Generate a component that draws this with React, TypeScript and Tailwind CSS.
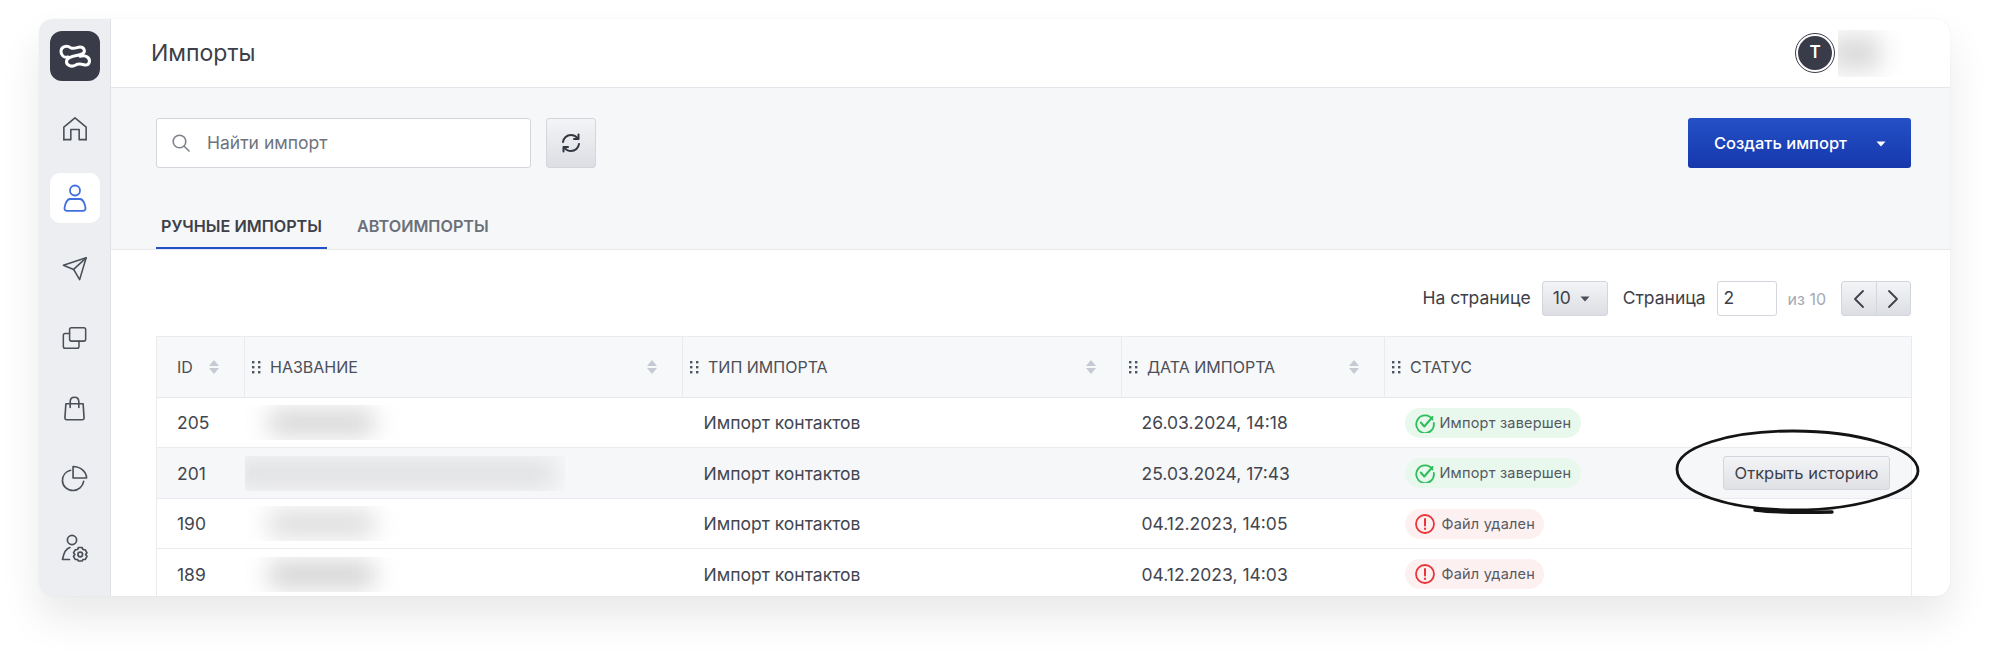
import React from 'react';

const inter = "font-['Inter','Noto_Sans',sans-serif]";

const rows = [
  { id: '205', date: '26.03.2024, 14:18', ok: true, height: 'h-[50px]', blur: 'ml-[24px] w-[105px] bg-[#d4d4d4]' },
  { id: '201', date: '25.03.2024, 17:43', ok: true, height: 'h-[51px]', blur: 'ml-[-10px] w-[320px] bg-[#dcdddf]' },
  { id: '190', date: '04.12.2023, 14:05', ok: false, height: 'h-[50px]', blur: 'ml-[24px] w-[105px] bg-[#dadada]' },
  { id: '189', date: '04.12.2023, 14:03', ok: false, height: 'h-[51px]', blur: 'ml-[24px] w-[105px] bg-[#d0d0d0]' },
];

const Logo = () => (
  <svg width="50" height="50" viewBox="58 32 150 150" fill="none" stroke="white" strokeWidth="9" strokeLinecap="round" strokeLinejoin="round">
    <path d="M112 110C100 114 90 104 91 92C92 78 108 74 120 82C130 88 140 80 148 80C162 80 166 96 154 101C140 107 114 106 108 120C104 134 122 142 135 134C145 128 155 132 162 134C176 136 182 120 170 110C162 104 154 106 148 108" />
  </svg>
);

const icon = { fill: 'none', stroke: '#4b4f58', strokeWidth: 1.7, strokeLinecap: 'round', strokeLinejoin: 'round' } as const;

const Home = () => (
  <svg width="26" height="25" viewBox="0 0 28 26" {...icon}>
    <path d="M2 25V11.5L14 1.5L26 11.5V25" />
    <path d="M2 25H9.5V14H18.5V25H26" />
  </svg>
);

const User = () => (
  <svg width="24" height="28" viewBox="0 0 24 28" fill="none" stroke="#3f6fe0" strokeWidth="1.8" strokeLinejoin="round">
    <circle cx="12" cy="6.5" r="5" />
    <path d="M7 15H17C20 15 22 20 22.5 24C22.7 25.8 21.5 26.8 20 26.8H4C2.5 26.8 1.3 25.8 1.5 24C2 20 4 15 7 15Z" />
  </svg>
);

const Send = () => (
  <svg width="26" height="25" viewBox="0 0 28 26" {...icon}>
    <path d="M1.5 9.5L26 1.5L19 25L12.5 14L1.5 9.5Z" />
    <path d="M12.5 14L26 1.5" />
  </svg>
);

const Copy = () => (
  <svg width="25" height="24" viewBox="0 0 28 26" {...icon}>
    <rect x="8.5" y="1.5" width="18" height="15" rx="2" />
    <path d="M8.5 8H3.5C2.4 8 1.5 8.9 1.5 10V22.5C1.5 23.6 2.4 24.5 3.5 24.5H17C18.1 24.5 19 23.6 19 22.5V16.5" />
  </svg>
);

const Bag = () => (
  <svg width="23" height="25" viewBox="0 0 24 26" {...icon}>
    <path d="M3 8H21L22 23C22 24 21.5 24.7 20.5 24.7H3.5C2.5 24.7 2 24 2 23L3 8Z" />
    <path d="M7.5 12V6C7.5 3 9.5 1.2 12 1.2C14.5 1.2 16.5 3 16.5 6V12" />
  </svg>
);

const Pie = () => (
  <svg width="27" height="27" viewBox="0 0 28 28" {...icon}>
    <path d="M10 5.5C5 6.8 1.5 11 1.5 16C1.5 22 6.5 26.5 12.5 26.5C18 26.5 22.5 22.5 23.5 17" />
    <path d="M12.5 1.5C20 1.5 26.5 7 26.5 13.5H12.5V1.5Z" />
  </svg>
);

const UserCog = () => (
  <svg width="28" height="28" viewBox="0 0 28 28" {...icon}>
    <circle cx="11" cy="6" r="4.6" />
    <path d="M9 13.5C5 14.5 2.5 20 1.5 25.5H8.5" />
    <path d="M17.5 13.5H21L22 15.5L24.3 15.8L26 18.8L24.6 20.5L26 22.3L24.3 25.3L22 25.5L21 27H17.5L16.5 25.5L14.2 25.3L12.5 22.3L13.9 20.5L12.5 18.8L14.2 15.8L16.5 15.5L17.5 13.5Z" />
    <circle cx="19.25" cy="20.5" r="2.3" />
  </svg>
);

const Grip = () => (
  <svg width="9" height="14" viewBox="0 0 9 14" fill="#4b5563">
    <rect x="0" y="1" width="2.4" height="2.4" />
    <rect x="6" y="1" width="2.4" height="2.4" />
    <rect x="0" y="6" width="2.4" height="2.4" />
    <rect x="6" y="6" width="2.4" height="2.4" />
    <rect x="0" y="11" width="2.4" height="2.4" />
    <rect x="6" y="11" width="2.4" height="2.4" />
  </svg>
);

const Sort = () => (
  <svg width="10" height="14" viewBox="0 0 10 14" fill="#c5cad3">
    <path d="M5 0L10 6H0Z" />
    <path d="M5 14L0 8H10Z" />
  </svg>
);

const Caret = ({ color }: { color: string }) => (
  <svg width="10" height="6" viewBox="0 0 10 6" fill={color}>
    <path d="M0.5 0.5H9.5L5 5.5Z" />
  </svg>
);

const Chevron = ({ right }: { right?: boolean }) => (
  <svg width="12" height="20" viewBox="0 0 12 20" fill="none" stroke="#3d4048" strokeWidth="1.8" strokeLinecap="round" strokeLinejoin="round">
    <path d={right ? 'M2 2L10 10L2 18' : 'M10 2L2 10L10 18'} />
  </svg>
);

const Badge = ({ ok }: { ok: boolean }) => (
  <span className={`inline-flex h-[30px] items-center rounded-full pl-[10px] ${ok ? 'gap-[5px] bg-[#e8f8ec] pr-[10px]' : 'gap-[7px] bg-[#fdf0f0] pr-[9px]'} text-[14.5px] tracking-[0.2px] text-[#565a63]`}>
    {ok ? (
      <svg width="20" height="20" viewBox="0 0 20 20" fill="none" stroke="#2fbd5c" strokeWidth="1.8" strokeLinecap="round" strokeLinejoin="round">
        <path d="M17.5 6.5A8.8 8.8 0 1 0 18.8 10" />
        <path d="M5.8 9.5L9.3 13.5L17.5 4" strokeWidth="2" />
      </svg>
    ) : (
      <svg width="20" height="20" viewBox="0 0 20 20" fill="none" stroke="#e8353a" strokeWidth="1.8" strokeLinecap="round">
        <circle cx="10" cy="10" r="9" />
        <path d="M10 5V11.5" strokeWidth="2" />
        <path d="M10 14.7V15" strokeWidth="2.2" />
      </svg>
    )}
    {ok ? 'Импорт завершен' : 'Файл удален'}
  </span>
);

const Head = ({ title, width, sort = true }: { title: string; width: string; sort?: boolean }) => (
  <th className={`${width} border-l border-[#e9ebef] p-0 font-normal`}>
    <div className="flex items-center pl-[7px] pr-[25px] text-[16px] text-[#4b4f58]">
      <Grip />
      <span className="ml-[9px] flex-1 text-left">{title}</span>
      {sort && <Sort />}
    </div>
  </th>
);

export default function App() {
  return (
    <div className={`h-[656px] w-[1990px] overflow-hidden bg-white pl-[39px] pt-[19px] ${inter}`}>
      <div className="relative flex h-[577px] w-[1911px] overflow-hidden rounded-[14px] bg-white shadow-[0_0_1px_rgba(0,0,0,0.12),0_22px_40px_rgba(0,0,0,0.09)]">
        {/* sidebar */}
        <aside className="flex w-[72px] shrink-0 flex-col items-center border-r border-[#dfe1e7] bg-[#eceef2] pt-[12px]">
          <div className="flex h-[50px] w-[50px] items-center justify-center rounded-[12px] bg-[#393c48]">
            <Logo />
          </div>
          <div className="mt-[22px] flex h-[50px] w-[50px] items-center justify-center"><Home /></div>
          <div className="mt-[20px] flex h-[50px] w-[50px] items-center justify-center rounded-[10px] bg-white"><User /></div>
          <div className="mt-[20px] flex h-[50px] w-[50px] items-center justify-center"><Send /></div>
          <div className="mt-[20px] flex h-[50px] w-[50px] items-center justify-center"><Copy /></div>
          <div className="mt-[20px] flex h-[50px] w-[50px] items-center justify-center"><Bag /></div>
          <div className="mt-[20px] flex h-[50px] w-[50px] items-center justify-center"><Pie /></div>
          <div className="mt-[20px] flex h-[50px] w-[50px] items-center justify-center"><UserCog /></div>
        </aside>

        <main className="flex min-w-0 flex-1 flex-col">
          {/* header */}
          <header className="flex h-[69px] shrink-0 items-center justify-between border-b border-[#e3e5ea] pl-[40px] pr-[35px]">
            <h1 className="text-[23px] font-normal text-[#3d4048]">Импорты</h1>
            <div className="flex items-center gap-[3px]">
              <div className="flex h-[40px] w-[40px] items-center justify-center rounded-full border-[1.5px] border-[#393c48] bg-white">
                <div className="flex h-[34px] w-[34px] items-center justify-center rounded-full bg-[#393c48] text-[17px] font-semibold text-white">T</div>
              </div>
              <div className="h-[47px] w-[77px] overflow-hidden">
                <div className="ml-[-8px] mt-[6px] h-[34px] w-[50px] bg-[#d8d8d8] blur-[12px]" />
              </div>
            </div>
          </header>

          {/* toolbar + tabs */}
          <section className="h-[162px] shrink-0 border-b border-[#e6e8ec] bg-[#f6f7f9] pl-[45px] pr-[39px]">
            <div className="flex items-start justify-between pt-[30px]">
              <div className="flex gap-[15px]">
                <label className="flex h-[50px] w-[375px] items-center rounded-[3px] border border-[#d3d6dc] bg-white pl-[14px]">
                  <svg width="20" height="20" viewBox="0 0 20 20" fill="none" stroke="#7d828c" strokeWidth="1.6" strokeLinecap="round">
                    <circle cx="8.5" cy="8.5" r="6.3" />
                    <path d="M13.2 13.2L18 18" />
                  </svg>
                  <span className="ml-[16px] pt-[1px] text-[17.5px] text-[#6f737c]">Найти импорт</span>
                </label>
                <button className="flex h-[50px] w-[50px] items-center justify-center rounded-[3px] border border-[#d3d6dc] bg-gradient-to-b from-[#f3f4f6] to-[#dcdee3]">
                  <svg width="20" height="20" viewBox="0 0 20 20" fill="none" stroke="#33363f" strokeWidth="2" strokeLinecap="round" strokeLinejoin="round">
                    <path d="M2 9C2.5 5 5.8 2 10 2C12.8 2 15.2 3.4 16.8 5.5" />
                    <path d="M18 11C17.5 15 14.2 18 10 18C7.2 18 4.8 16.6 3.2 14.5" />
                    <path d="M17.5 1.5V6H13" />
                    <path d="M2.5 18.5V14H7" />
                  </svg>
                </button>
              </div>
              <button className="flex h-[50px] w-[223px] items-center rounded-[3px] bg-gradient-to-b from-[#2450c6] to-[#1738ad] pl-[26px] pt-[1px] text-[16.5px] font-medium text-white">
                Создать импорт
                <span className="ml-[29px]"><Caret color="white" /></span>
              </button>
            </div>
            <div className="mt-[32px] flex">
              <div className="flex h-[49px] w-[171px] items-center justify-center border-b-[2px] border-[#2450c6] pt-[6px] text-[16.2px] font-semibold text-[#3d4048]">РУЧНЫЕ ИМПОРТЫ</div>
              <div className="ml-[30px] flex h-[49px] items-center pt-[4px] text-[16.2px] font-semibold text-[#6b6f78]">АВТОИМПОРТЫ</div>
            </div>
          </section>

          {/* pager */}
          <section className="flex-1 pl-[45px] pr-[39px]">
            <div className="flex h-[86px] items-start justify-end pt-[31px] text-[17.5px] text-[#3d4048]">
              <div className="flex h-[35px] items-center">
                <span>На странице</span>
                <button className="ml-[11px] flex h-[35px] w-[66px] items-center rounded-[3px] border border-[#d3d6dc] bg-gradient-to-b from-[#f3f4f6] to-[#dcdee3] pl-[10px]">
                  10
                  <span className="ml-[9px]"><Caret color="#4b4f58" /></span>
                </button>
                <span className="ml-[15px]">Страница</span>
                <div className="ml-[11px] flex h-[35px] w-[60px] items-center rounded-[3px] border border-[#d3d6dc] bg-white pl-[6px]">2</div>
                <span className="ml-[11px] text-[16px] text-[#a5a9b2]">из 10</span>
                <div className="ml-[15px] flex h-[35px] w-[70px] rounded-[3px] border border-[#d3d6dc] bg-gradient-to-b from-[#f3f4f6] to-[#dcdee3]">
                  <button className="flex flex-1 items-center justify-center border-r border-[#d3d6dc]"><Chevron /></button>
                  <button className="flex flex-1 items-center justify-center"><Chevron right /></button>
                </div>
              </div>
            </div>

            {/* table */}
            <table className="w-[1755px] table-fixed border-collapse border-x border-t border-[#e9ebef] text-[17.5px] text-[#43464f]">
              <thead>
                <tr className="h-[61px] border-b border-[#e6e8ec] bg-[#f7f8fa]">
                  <th className="w-[88px] p-0 font-normal">
                    <div className="flex items-center justify-between pl-[20px] pr-[25px] text-[16px] text-[#4b4f58]">
                      ID <Sort />
                    </div>
                  </th>
                  <Head title="НАЗВАНИЕ" width="w-[438px]" />
                  <Head title="ТИП ИМПОРТА" width="w-[439px]" />
                  <Head title="ДАТА ИМПОРТА" width="w-[263px]" />
                  <Head title="СТАТУС" width="w-[527px]" sort={false} />
                </tr>
              </thead>
              <tbody>
                {rows.map((r, i) => (
                  <tr key={r.id} className={`${r.height} border-b border-[#e9ebef] ${i === 1 ? 'bg-[#f6f7f9]' : 'bg-white'}`}>
                    <td className="p-0 pl-[20px] pt-[2px]">{r.id}</td>
                    <td className="p-0">
                      <div className="h-[35px] w-[320px] overflow-hidden">
                        <div className={`mt-[5px] h-[25px] blur-[12px] ${r.blur}`} />
                      </div>
                    </td>
                    <td className="p-0 pl-[21px] pt-[2px]">Импорт контактов</td>
                    <td className="p-0 pl-[20px] pt-[2px]">{r.date}</td>
                    <td className="p-0 pl-[20px]">
                      <div className="flex items-center justify-between pr-[21px]">
                        <Badge ok={r.ok} />
                        {i === 1 && (
                          <button className="flex h-[34px] w-[167px] items-center justify-center rounded-[3px] border border-[#d3d6dc] bg-gradient-to-b from-[#f3f4f6] to-[#dfe1e6] text-[16.5px] text-[#3d4048]">
                            Открыть историю
                          </button>
                        )}
                      </div>
                    </td>
                  </tr>
                ))}
              </tbody>
            </table>
          </section>
        </main>

        {/* hand drawn ellipse over the button */}
        <svg className="absolute left-[1636px] top-[410px]" width="246" height="86" viewBox="0 0 246 86" fill="none" stroke="#141414" strokeWidth="2.8" strokeLinecap="round">
          <path d="M2 40C2 18 55 2 118 2C180 2 243 18 243 42C243 62 185 81 120 81C55 81 2 64 2 40Z" />
          <path d="M80 81C96 83 116 84 157 83" strokeWidth="3.4" />
        </svg>
      </div>
    </div>
  );
}
